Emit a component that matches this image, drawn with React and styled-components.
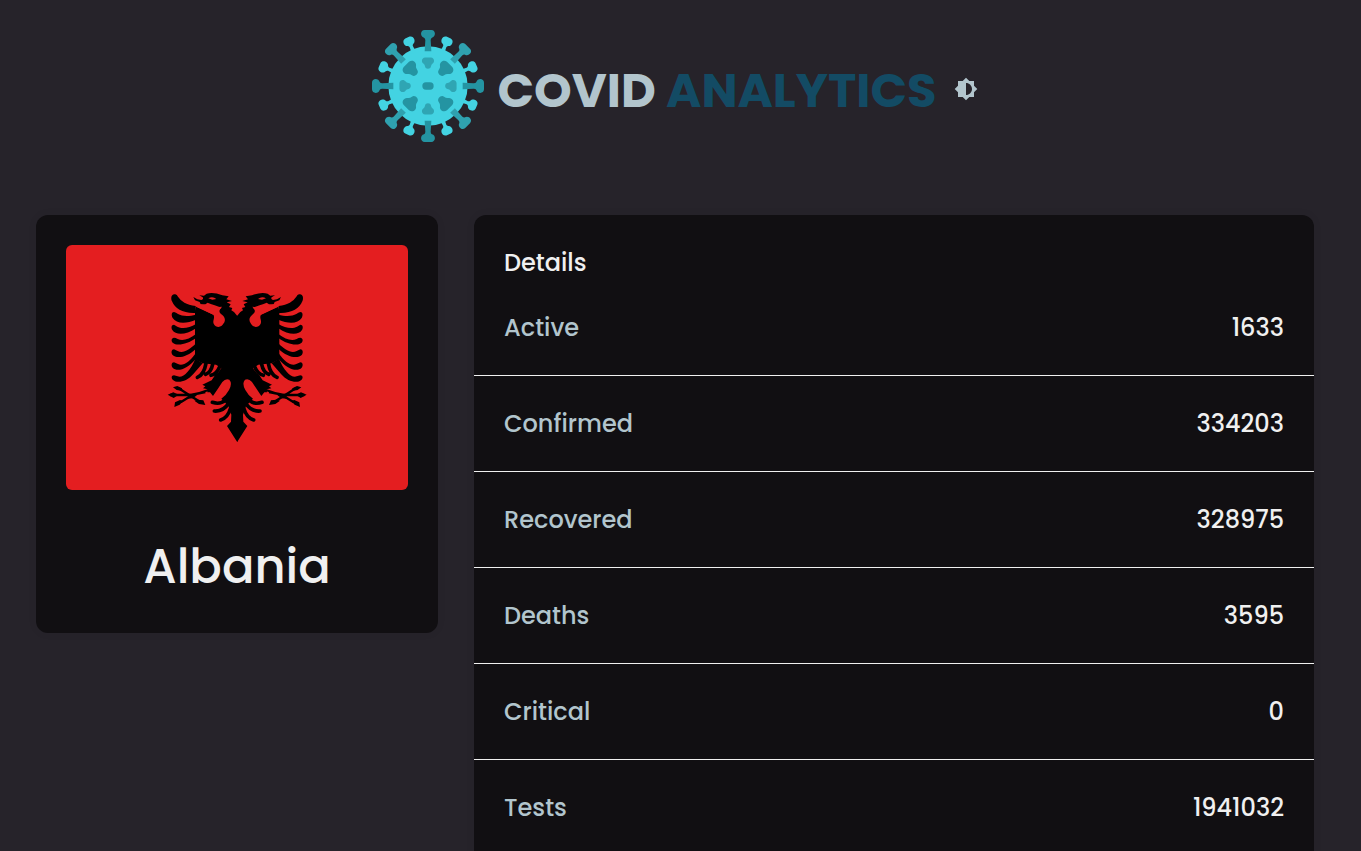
import React from "react";
import styled, { createGlobalStyle } from "styled-components";
import { MdBrightness6 } from "react-icons/md";

const GlobalStyle = createGlobalStyle`
  * { box-sizing: border-box; }
  html { scrollbar-width: none; }
  body {
    margin: 0;
    background: #26232a;
    color: #f0f0f0;
    font-family: Poppins, Inter, "Liberation Sans", sans-serif;
    font-size: 24px;
    font-weight: 500;
    line-height: 35px;
  }
`;

const Page = styled.div`
  min-height: 100vh;
  padding: 30px 47px 30px 36px;
`;

const Header = styled.header`
  display: flex;
  align-items: center;
  justify-content: center;
  gap: 13px;
  height: 112px;
  padding-left: 4px;
  margin-bottom: 73px;
`;

const Logo = styled.svg`
  flex: none;
  width: 112px;
  height: 112px;
`;

const Title = styled.h1`
  margin: 0;
  padding-top: 10px;
  color: #b2c5cd;
  font-size: 48px;
  font-weight: 700;
  line-height: 60px;
`;

const Accent = styled.span`
  color: #134b64;
`;

const ThemeButton = styled.button`
  display: flex;
  padding: 8px 4px 2px;
  border: 0;
  background: none;
  color: #b2c5cd;
  font-size: 24px;
  cursor: pointer;
`;

const Columns = styled.main`
  display: grid;
  grid-template-columns: 402fr 840fr;
  align-items: start;
  gap: 36px;
`;

const Card = styled.section`
  overflow: hidden;
  padding-bottom: 30px;
  border-radius: 12px;
  background: #110f12;
  box-shadow: 0 0 10px rgba(0, 0, 0, 0.06);
`;

const CountryCard = styled(Card)`
  padding: 30px;
  text-align: center;
`;

const Flag = styled.svg`
  display: block;
  width: 100%;
  border-radius: 6px;
  background: #e41e20;
`;

const CountryName = styled.h2`
  margin: 40px 0 0;
  font-size: 48px;
  font-weight: 500;
  line-height: 73px;
`;

const CardTitle = styled.h2`
  margin: 0;
  padding: 30px 30px 0;
  font-size: 24px;
  font-weight: 500;
`;

const Stats = styled.table`
  width: 100%;
  border-collapse: separate;
  border-spacing: 0;
`;

const Label = styled.th`
  padding: 30px;
  border-bottom: 1px solid #f0f0f0;
  color: #b2c5cd;
  font-weight: 500;
  text-align: left;
`;

const Value = styled.td`
  padding: 30px;
  border-bottom: 1px solid #f0f0f0;
  text-align: right;
`;

const stats = [
  ["Active", "1633"],
  ["Confirmed", "334203"],
  ["Recovered", "328975"],
  ["Deaths", "3595"],
  ["Critical", "0"],
  ["Tests", "1941032"],
];

const SPIKE =
  "M-10-168H10C24-168 24-148 12-145Q8-143 8-137L10-104H-10L-8-137Q-8-143-12-145C-24-148-24-168-10-168Z";
const KNOB =
  "M-7-158H7C20-157 20-137 9-134Q5-132 5-128L7-108H-7L-5-128Q-5-132-9-134C-20-137-20-157-7-158Z";
const LOBES =
  "M-8-87H8C18-86 19-74 12-70Q9-68 8-62C7-54-7-54-8-62Q-9-68-12-70C-19-74-18-86-8-87Z";

function VirusLogo() {
  return (
    <Logo viewBox="-168 -168 336 336" aria-hidden="true">
      <circle r="119" fill="#43d3e2" />
      {[23, 67, 113, 157, 203, 247, 293, 337].map((a) => (
        <path key={a} d={KNOB} fill="#43d3e2" transform={`rotate(${a})`} />
      ))}
      {[45, 135, 225, 315].map((a) => (
        <g key={a} transform={`rotate(${a})`}>
          <path d={SPIKE} fill="#2fa1af" />
          <path d={LOBES} fill="#2494a2" transform="translate(0 30) scale(1.4)" />
        </g>
      ))}
      {[0, 90, 180, 270].map((a) => (
        <g key={a} transform={`rotate(${a})`}>
          <path d={SPIKE} fill="#2494a2" />
          <path d={LOBES} fill="#2fa5b3" transform="translate(0 10) scale(1.1)" />
        </g>
      ))}
      <rect x="-17" y="-11" width="34" height="22" rx="11" fill="#2494a2" />
    </Logo>
  );
}

function EagleHalf() {
  return (
    <g>
      {/* head, breast, leg and tail */}
      <path d="M232 108L222 96 214 91 217 84 207 81 212 73 200 67 216 63 199 58 206 49 187 46Q160 35 140 41L132 47 118 46 128 52Q132 57 124 60L112 58 100 51 105 61 119 66 122 73 136 73 143 68Q151 72 164 76L185 83 160 104 108 80 105 92V238L128 250 148 252 168 254 184 264Q177 278 166 284L155 301 144 306 127 314 136 319 129 325 143 328 142 337 150 337 159 348Q174 326 187 306 197 294 208 299 218 310 207 330 198 347 184 356L194 366 206 380 214 404 213 425 201 438 232 487Z" />
      {/* neck opening */}
      <path fill="#e41e20" d="M110 80L122 73Q152 85 186 80C174 92 178 98 186 104 196 112 197 122 191 130 184 144 168 144 161 131 157 121 166 113 160 104Z" />
      <path fill="#e41e20" d="M145 55Q158 48 169 57L157 59Z" />
      {/* wing feathers */}
      <path d="M46 43C35 40 31 53 36 64 45 86 69 101 107 99V78C79 75 63 63 54 50Q51 44 46 43Z" />
      <path d="M42 96C34 96 34 106 38 114 49 132 79 132 108 119V104C86 110 66 109 54 102Q48 97 42 96Z" />
      <path d="M42 134C34 134 33 143 37 150 47 166 77 166 108 145V132C88 144 66 147 52 140Z" />
      <path d="M42 173C34 174 33 182 38 188 51 199 82 193 108 174V162C87 178 68 184 53 177Q47 173 42 173Z" />
      <path d="M42 208C34 208 33 218 37 224 49 237 80 233 108 206V190C88 211 68 221 53 213Z" />
      <path d="M42 247C34 247 33 258 38 263 51 277 82 268 108 236V218C88 248 68 259 54 252Z" />
      <path d="M42 286C34 286 33 295 39 300 51 311 80 306 100 282L128 250 106 236C91 273 69 295 53 289Z" />
      <g fill="none" stroke="#000" strokeLinecap="round" strokeWidth="11">
        <path d="M138 250Q132 284 112 292M158 253Q153 277 137 283M178 262Q170 282 153 286" />
        {/* tail feathers */}
        <path d="M157 367Q181 375 196 360M163 393Q190 395 206 370M182 420Q203 414 212 384" />
      </g>
      {/* claw */}
      <g fill="none" stroke="#000" strokeWidth="7">
        <path d="M145 330L92 348 62 367M30 345H92L136 336M56 325L92 348 122 367" />
      </g>
      <path d="M23 344L40 337 56 344 41 354ZM39 322L52 318 66 325 67 333 50 330ZM43 381L45 367 60 360 69 363 59 374ZM136 375L130 361 113 359 103 362 117 372ZM76 340L95 342 111 346 98 355 77 357 85 349Z" />
    </g>
  );
}

function AlbanianFlag() {
  return (
    <Flag viewBox="-282 -105 1026 735" role="img" aria-label="Flag of Albania">
      <EagleHalf />
      <g transform="translate(463 0) scale(-1 1)">
        <EagleHalf />
      </g>
    </Flag>
  );
}

export default function App() {
  return (
    <>
      <GlobalStyle />
      <Page>
        <Header>
          <VirusLogo />
          <Title>
            COVID <Accent>ANALYTICS</Accent>
          </Title>
          <ThemeButton type="button" aria-label="Toggle theme">
            <MdBrightness6 />
          </ThemeButton>
        </Header>
        <Columns>
          <CountryCard>
            <AlbanianFlag />
            <CountryName>Albania</CountryName>
          </CountryCard>
          <Card>
            <CardTitle id="details-title">Details</CardTitle>
            <Stats aria-labelledby="details-title">
              <tbody>
                {stats.map(([label, value]) => (
                  <tr key={label}>
                    <Label scope="row">{label}</Label>
                    <Value>{value}</Value>
                  </tr>
                ))}
              </tbody>
            </Stats>
          </Card>
        </Columns>
      </Page>
    </>
  );
}
